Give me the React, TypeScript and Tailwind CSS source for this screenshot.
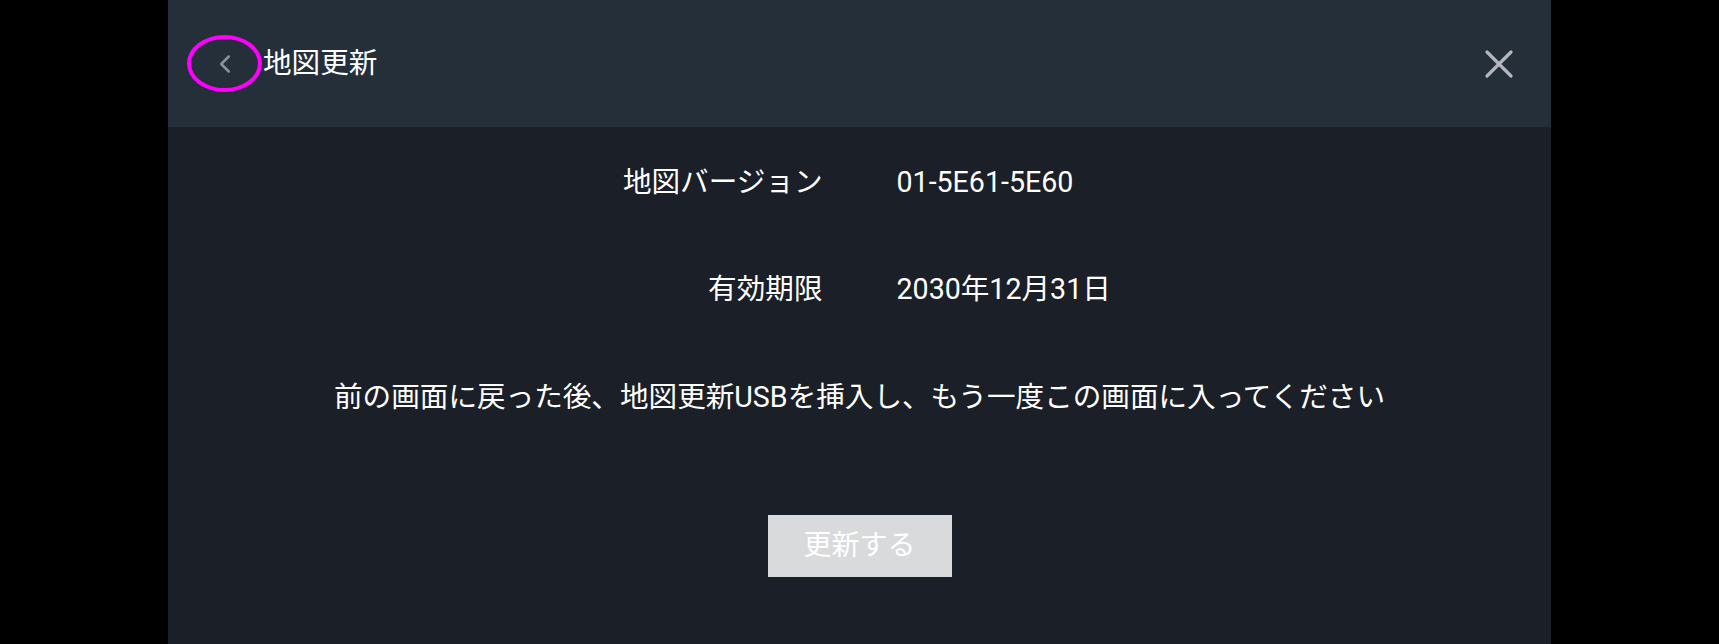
import { X, ChevronLeft } from 'lucide-react';

const rows = [
  { label: "地図バージョン", value: "01-5E61-5E60" },
  { label: "有効期限", value: "2030年12月31日" }
];

const App = () => {
  return (
    <div
      className="w-[1719px] h-[644px] bg-black flex justify-center overflow-hidden"
      style={{ fontFamily: 'Roboto, "Noto Sans CJK JP", sans-serif' }}
    >
      <div className="w-[1383px] h-full bg-[#1b2028] flex flex-col">
        {/* Header */}
        <div className="h-[127px] bg-[#252f3a] flex items-center pl-[19px] pr-[28px] shrink-0">
          <div className="relative w-[75px] h-[57px] flex items-center justify-center">
            <div className="absolute inset-0 rounded-[50%] border-[4px] border-[#ff00ff]" />
            <ChevronLeft className="w-[30px] h-[30px] text-[#8c9299]" strokeWidth={2} />
          </div>
          <h1 className="ml-[1px] text-[28.6px] text-white leading-none">地図更新</h1>
          <button className="ml-auto w-[48px] h-[48px] flex items-center justify-center">
            <X className="w-[48px] h-[48px] text-[#b3b7bd]" strokeWidth={1.6} />
          </button>
        </div>

        {/* Body */}
        <div className="flex flex-col items-center pt-[40px]">
          <div className="grid grid-cols-[1fr_1fr] gap-y-[77px] w-full">
            {rows.map((row) => (
              <div key={row.label} className="contents">
                <div className="text-right pr-[37px] text-[28.6px] text-white leading-[30px]">{row.label}</div>
                <div className="pl-[37px] text-[28.6px] text-white leading-[30px]">{row.value}</div>
              </div>
            ))}
          </div>
          <p className="mt-[78px] text-[28.6px] text-white leading-[30px]">
            前の画面に戻った後、地図更新USBを挿入し、もう一度この画面に入ってください
          </p>
          <button className="mt-[103px] w-[184px] h-[62px] bg-[#d9dadc] text-white text-[28px] leading-none">
            更新する
          </button>
        </div>
      </div>
    </div>
  );
};

export default App;
